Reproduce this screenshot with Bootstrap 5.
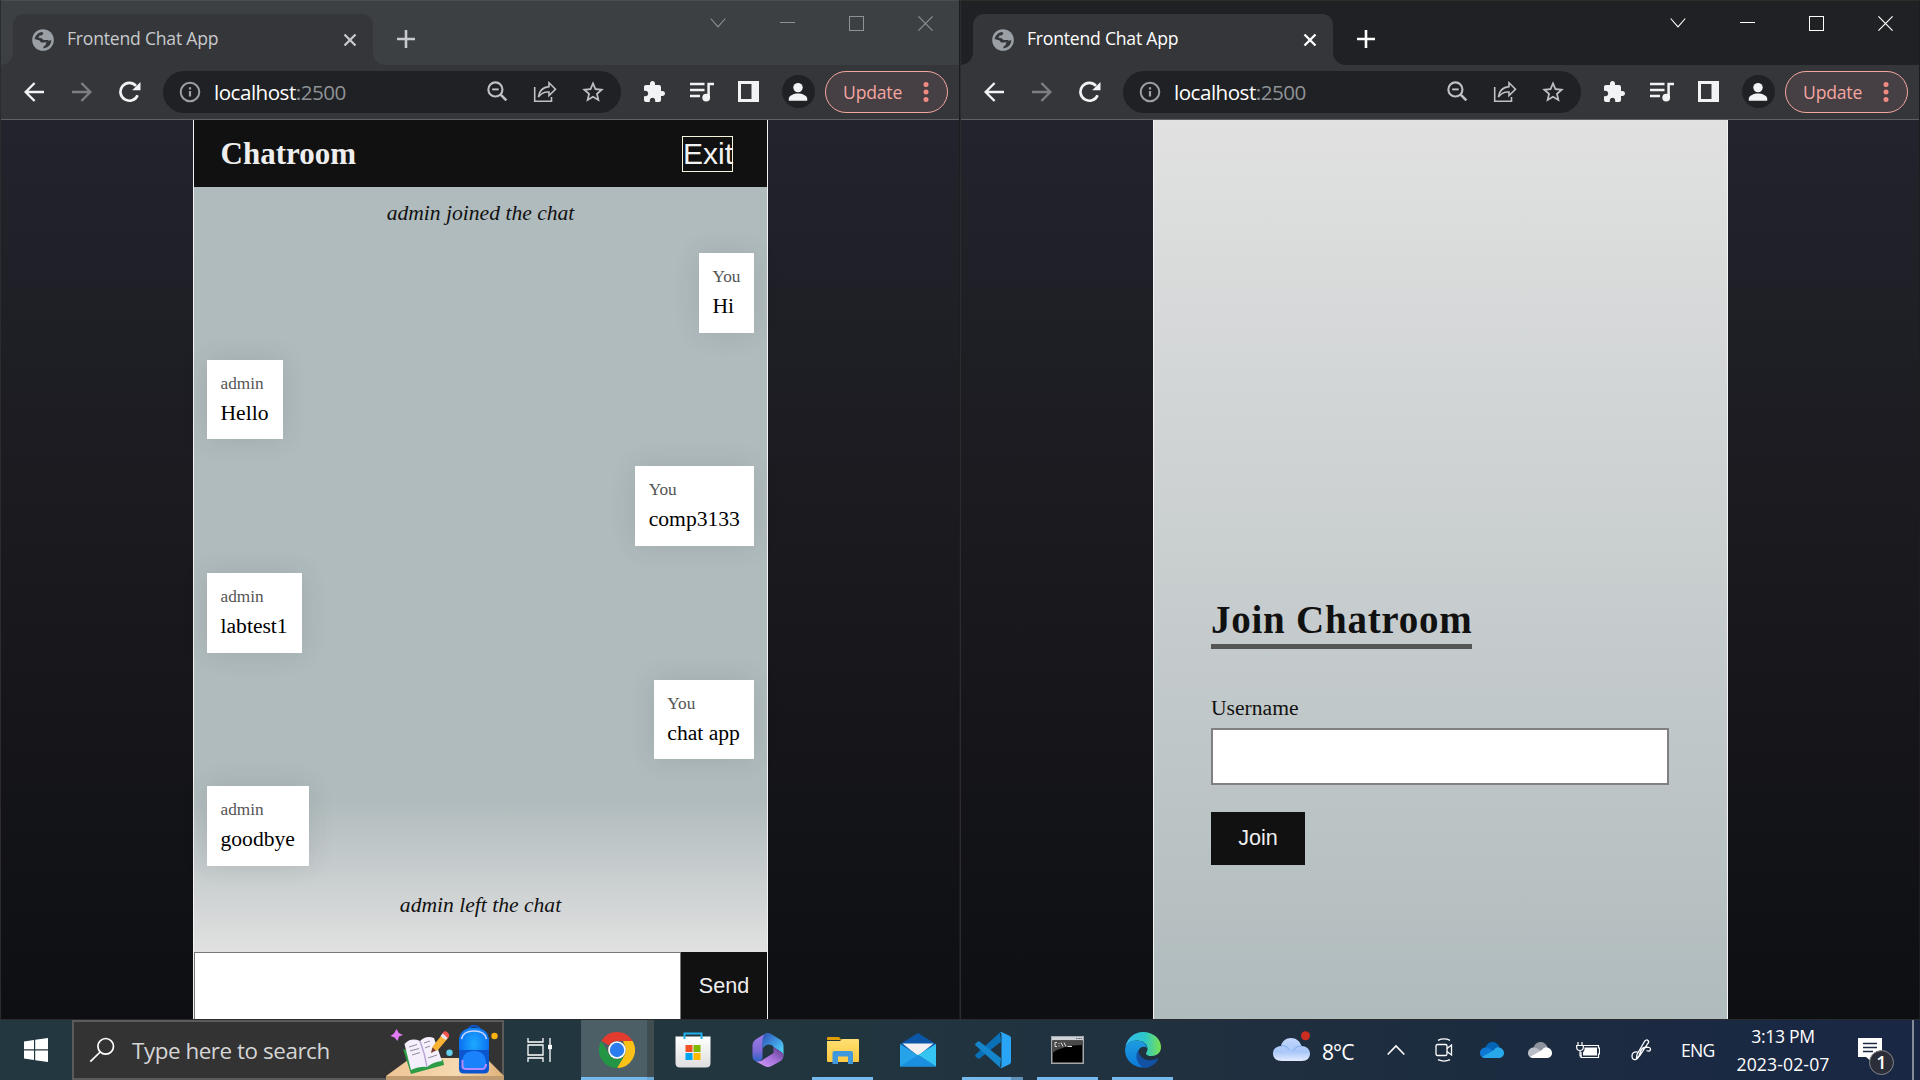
<!DOCTYPE html>
<html lang="en">
<head>
<meta charset="utf-8">
<title>Frontend Chat App</title>
<link href="https://cdn.jsdelivr.net/npm/bootstrap@5.3.0/dist/css/bootstrap.min.css" rel="stylesheet">
<style>
html,body{height:100%;overflow:hidden}
body{font-family:"Open Sans","Noto Sans",sans-serif;background:#0f1014;width:1920px;height:1080px}
svg{display:block;flex:none}
.desk{height:1080px}
.windows{height:1020px;background:#202124}
.win{width:960px;height:1020px;overflow:hidden;position:relative;border-bottom:1px solid #2b2b2b}
.win::before{content:"";position:absolute;left:0;top:0;width:1px;height:100%;background:#2c2c2e;z-index:2}
.win::after{content:"";position:absolute;right:0;top:0;width:1px;height:100%;background:#1d1d1f;z-index:2}
.strip{height:65px;background:#202124;box-shadow:inset 0 1px #2d2c29;--ctl:#fff;color:#fff}
.win-idle .strip{background:#3c4043;box-shadow:inset 0 1px #4b4e50;--ctl:#8f9193;color:#c8cacd}
.tab{width:360px;height:51px;margin:14px 0 0 13px;background:#35363a;border-radius:11px 11px 0 0;position:relative;padding:0 16px 0 19px}
.tab::before,.tab::after{content:"";position:absolute;bottom:0;width:12px;height:12px}
.tab::before{left:-12px;background:radial-gradient(circle at 0 0,transparent 11.5px,#35363a 12px)}
.tab::after{right:-12px;background:radial-gradient(circle at 100% 0,transparent 11.5px,#35363a 12px)}
.tab-title{font-size:17.6px;line-height:49px;margin-left:13px;letter-spacing:-.22px;white-space:nowrap;height:51px}
.newtab{width:48px;height:50px;margin:14px 0 0 9px}
.ctl{width:69px;height:46px;color:var(--ctl);padding-right:1px}
.tools{height:55px;background:#35363a;border-bottom:1px solid #606063;padding:0 0 1px 10px;color:#f1f3f4}
.cell{width:48px;height:42px;display:flex;align-items:center;justify-content:center;flex:none}
.omni{width:458px;height:42px;border-radius:21px;background:#202124;margin:0 9px;padding:0 4px 0 16px;color:#bdc1c6}
.url{font-size:20.6px;line-height:42px;margin-left:13px;letter-spacing:-.5px;color:#fff}
.url span{color:#8f9296}
.avatar{width:33px;height:33px;border-radius:50%;background:#202124}
.upd{width:123px;height:42px;border:1.5px solid #f3a6a0;border-radius:21px;background:#463f43;color:#f3a6a0;font-size:17.6px;letter-spacing:-.2px;margin-left:3px;padding:0 18px 0 17px;line-height:38px}
.page{height:899px;background:linear-gradient(#23232d,#1a1a1f 45%,#0e0f13);padding-left:193px;font-family:"Liberation Serif",serif;font-size:21.6px;color:#111}
.shell{width:575px;height:899px;border:1px solid #f3f3f3;border-width:0 1px}
.room{background:#b0bbbd}
.room-head{height:67px;background:#111;padding:0 34px 0 26.5px;color:#eee}
.room-head h1{font:bold 31px/67px "Liberation Serif",serif;margin:0}
.exit{font:30px/34px "Liberation Sans",sans-serif;width:51px;height:36px;border:1px solid #f5f5dc;background:#111;color:#f2f2f2;padding:0;white-space:nowrap;margin-top:1px}
.log{height:765px;padding:14px 13px 0;background:linear-gradient(#b0bbbd 612px,#e1e1e1)}
.note{font-style:italic;line-height:25px;margin-bottom:27px;text-align:center}
.bub{background:#fff;padding:14px 13.5px 13px;margin-bottom:27px;box-shadow:0 0 27px rgba(51,51,51,.12);height:79.67px;color:#000}
.bub small{display:block;font-size:17.28px;line-height:20px;color:#555;margin-bottom:7px}
.bub div{line-height:25px;padding-right:.6px}
.composer{height:67px}
.composer input{width:487px;border:1px solid #777;border-bottom:0;background:#fff;padding:0 12px;outline:0}
.composer button{width:86px;border:0;background:#111;color:#eee;font:21.6px/66px "Liberation Sans",sans-serif;padding:0}
.join{background:linear-gradient(#e1e1e1,#b0bbbd);padding:473px 57px 0 57px}
.join h2{font:bold 39px/46px "Liberation Serif",serif;letter-spacing:.75px;border-bottom:5px solid #555;margin:0 0 47px;height:56px;padding-top:4px}
.join label{line-height:25px;height:32px}
.join input{width:458px;height:57px;border:2px solid #808080;background:#fff;margin-bottom:27px;outline:0}
.join button{width:94px;height:53px;border:0;background:#111;color:#eee;font:21.6px/50px "Liberation Sans",sans-serif;padding:0 0 2px}
.taskbar{height:60px;background:linear-gradient(90deg,#22373f,#21363f 40%,#20303f 62%,#1c2c40 78%,#192744);color:#fff}
.start{width:72px}
.search{width:432px;height:60px;background:#333;border:2px solid #5c5b5c;position:relative;color:#d5d5d5;font-size:22.4px;padding-left:15px}
.search .txt{margin-left:17px;letter-spacing:-.44px;line-height:58px;height:56px;white-space:nowrap}
.school{position:absolute;right:-2px;top:-2px}
.apps{margin-left:2px}
.app{width:61px;height:60px;margin-right:14px;position:relative}
.app.run{border-bottom:3px solid #76b9ed;padding-top:3px}
.app.sel{width:66px;background:#4d5f66;margin-right:0}
.stack{width:7px;background:#3f4c50;border-bottom:3px solid #6ba8d8;margin-right:14px}
.app.vs{border-image:linear-gradient(90deg,#76b9ed 77%,#5f91ba 77%) 3}
.tv{width:75px}
.tray{font-size:17.6px}
.temp{font-size:21px;width:34px;letter-spacing:-.9px;line-height:64px;height:60px;margin:0 31px 0 11px;white-space:nowrap}
.tcell{width:48px;display:flex;justify-content:center}
.lang{width:32px;letter-spacing:-.7px;line-height:60px;height:60px;margin:0 24px 0 21px}
.clock{width:92px;line-height:28px;padding-top:2px;height:60px;white-space:nowrap;letter-spacing:-.3px}
.clock .day{letter-spacing:.12px}
.bell{position:relative;margin-left:29px;width:36px;height:60px}
.bell svg{position:absolute;left:0;top:16px}
.bubble-n{position:absolute;left:11px;top:30px;width:25px;height:25px;border-radius:50%;border:1px solid #85878c;background:#2b2e38;font:600 18px/22px "Open Sans",sans-serif;text-align:center}
.showdesk{width:8px;border-left:2px solid #838a98;margin-left:18px;height:60px}
</style>
<script src="https://cdn.jsdelivr.net/npm/bootstrap@5.3.0/dist/js/bootstrap.bundle.min.js"></script>
</head>
<body>
<svg width="0" height="0" class="position-absolute">
<defs>
<symbol id="globe" viewBox="0 0 22 22"><circle cx="11" cy="11" r="10.8" fill="#9aa0a6"/><g fill="#35363a"><path d="M2.6 9.9C3.2 6.6 6 3.4 10.2 2.9L11.3 4.2 10.2 6.2 7.5 6.600 6.500 8.700 9.800 9.300 12 11.500 11.900 13.500 9 13.600 7.600 11.600Z"/><path d="M19.300 11.300c.1 4.200-3.300 7.900-8 8.100l.4-2.100 2-1.200.4-2.300 2.300-2.200Z"/><path d="M11 11h5v1.600l-3 1-2-.7z"/></g></symbol>
<symbol id="cross" viewBox="0 0 14 14"><path d="M1.500 1.500 12.500 12.500M12.500 1.500 1.500 12.500" stroke="currentColor" stroke-width="2.300"/></symbol>
<symbol id="plus" viewBox="0 0 18 18"><path d="M9 0V18M0 9H18" stroke="currentColor" stroke-width="2.600"/></symbol>
<symbol id="c-down" viewBox="0 0 16 16"><path d="M.7 3.500 8 11.800 15.300 3.500" fill="none" stroke="currentColor" stroke-width="1.100"/></symbol>
<symbol id="c-min" viewBox="0 0 15 15"><path d="M0 6.500H15" stroke="currentColor"/></symbol>
<symbol id="c-max" viewBox="0 0 15 15"><rect x=".5" y=".5" width="14" height="14" fill="none" stroke="currentColor"/></symbol>
<symbol id="c-close" viewBox="0 0 15 15"><path d="M.4.4 14.600 14.600M14.600.4.4 14.600" stroke="currentColor" stroke-width="1.200"/></symbol>
<symbol id="back" viewBox="0 0 20 20"><path d="M20 10H1.800M10.600 1 1.600 10l9 9" fill="none" stroke="currentColor" stroke-width="2.400"/></symbol>
<symbol id="reload" viewBox="0 0 22 22"><path d="M18.600 14.200A8.900 8.900 0 1 1 17 4.900" fill="none" stroke="currentColor" stroke-width="2.700"/><path d="M21.500 1V9.200H13.200Z" fill="currentColor"/></symbol>
<symbol id="info" viewBox="0 0 22 22"><circle cx="11" cy="11" r="9.300" fill="none" stroke="#9aa0a6" stroke-width="2"/><path d="M11 10V15.600M11 6.200V8.400" stroke="#9aa0a6" stroke-width="2.200"/></symbol>
<symbol id="zoomout" viewBox="0 0 22 22"><circle cx="8.800" cy="8.800" r="7.400" fill="none" stroke="currentColor" stroke-width="2.200"/><path d="M5.400 8.800h6.800" stroke="currentColor" stroke-width="2"/><path d="M14 14l6.300 6.300" stroke="currentColor" stroke-width="2.800"/></symbol>
<symbol id="share" viewBox="0 0 24 22"><path d="M1.700 6v14.300h16.800V16" fill="none" stroke="currentColor" stroke-width="1.600"/><path d="M16 1.800 22.500 8.200 16 14.600V11C11.500 10.700 8 12 5.400 16.200 6 10.500 9.600 6.200 16 5.600Z" fill="none" stroke="currentColor" stroke-width="1.600"/></symbol>
<symbol id="star" viewBox="0 0 24 24"><path fill="currentColor" d="M22 9.240l-7.190-.62L12 2 9.190 8.630 2 9.240l5.460 4.730L5.820 21 12 17.270 18.180 21l-1.630-7.030L22 9.240zM12 15.400l-3.760 2.270 1-4.280-3.320-2.880 4.380-.38L12 6.100l1.710 4.040 4.380.38-3.320 2.880 1 4.280L12 15.400z"/></symbol>
<symbol id="ext" viewBox="0 0 24 24"><path fill="currentColor" d="M20.500 11H19V7c0-1.100-.9-2-2-2h-4V3.500C13 2.120 11.880 1 10.500 1S8 2.120 8 3.500V5H4c-1.100 0-1.990.9-1.990 2v3.800H3.500c1.490 0 2.700 1.210 2.700 2.700s-1.210 2.700-2.700 2.700H2V20c0 1.100.9 2 2 2h3.800v-1.500c0-1.490 1.210-2.700 2.700-2.700 1.490 0 2.700 1.210 2.700 2.700V22H17c1.100 0 2-.9 2-2v-4h1.500c1.380 0 2.500-1.120 2.500-2.500S21.880 11 20.500 11z"/></symbol>
<symbol id="music" viewBox="0 0 24 20"><path d="M0 2H14.500M0 8H14.500M0 14H10M24 2H18.600V15.500" fill="none" stroke="currentColor" stroke-width="2.500"/><circle cx="16.200" cy="15.600" r="3.900" fill="currentColor"/></symbol>
<symbol id="panel" viewBox="0 0 21 21"><path fill="currentColor" fill-rule="evenodd" d="M0 0H21V21H0ZM3 3V18H13.500V3Z"/></symbol>
<symbol id="person" viewBox="0 0 20 20"><circle cx="10" cy="5.600" r="4.700" fill="currentColor"/><path d="M.8 18.800V16.600C.8 13.400 6 11.400 10 11.400s9.200 2 9.200 5.200V18.800Z" fill="currentColor"/></symbol>
<symbol id="dots" viewBox="0 0 6 20"><g fill="#f28b82"><circle cx="3" cy="2.600" r="2.500"/><circle cx="3" cy="10" r="2.500"/><circle cx="3" cy="17.400" r="2.500"/></g></symbol>
<symbol id="od" viewBox="0 0 24 16"><path d="M5.500 6C6.500 2 9.500 0 12.500 0c3 0 6 2 7 5L12 11Z" fill="var(--a)"/><path d="M5 16C2 16 0 13.700 0 11c0-3 2.300-5.500 5.500-5.500 2 0 3.300.5 5 1.700L16 11 5 16Z" fill="var(--b)"/><path d="M2 15 14 8C15.500 5.500 18 4.800 20 5.800c2.500.7 4 2.700 4 5.200 0 2.800-2 5-5 5H5Z" fill="var(--c)"/></symbol>
<linearGradient id="gEdge" x1="0" x2="1"><stop stop-color="#35b8f1"/><stop offset=".55" stop-color="#2cc7c9"/><stop offset="1" stop-color="#7be34e"/></linearGradient>
<linearGradient id="gEdge2" x1="0" y1="0" x2="0" y2="1"><stop stop-color="#1e9de0"/><stop offset="1" stop-color="#0b7bd8"/></linearGradient>
<linearGradient id="gM1" x1="0" y1="0" x2="0" y2="1"><stop stop-color="#a17be6"/><stop offset=".6" stop-color="#7f6bd8"/><stop offset="1" stop-color="#2a63c4"/></linearGradient>
<linearGradient id="gM2" x1="0" y1="0" x2="1" y2="1"><stop stop-color="#2b4fb5"/><stop offset=".6" stop-color="#43a6e8"/><stop offset="1" stop-color="#58e8fb"/></linearGradient>
<linearGradient id="gM3" x1="0" y1="1" x2="1" y2="0"><stop stop-color="#d59cf5"/><stop offset=".5" stop-color="#a573dc"/><stop offset="1" stop-color="#5a3585"/></linearGradient>
<linearGradient id="gStore" x1="0" y1="0" x2="0" y2="1"><stop stop-color="#fff"/><stop offset="1" stop-color="#dedede"/></linearGradient>
<linearGradient id="gFold" x1="0" y1="0" x2="0" y2="1"><stop stop-color="#ffdf72"/><stop offset="1" stop-color="#fcc93f"/></linearGradient>
<linearGradient id="gCloud" x1="0" y1="0" x2="0" y2="1"><stop stop-color="#c2d8fc"/><stop offset=".6" stop-color="#a9c6f8"/><stop offset="1" stop-color="#e3edff"/></linearGradient>
<radialGradient id="gBag" cx=".5" cy=".35" r=".7"><stop stop-color="#1da9ff"/><stop offset=".65" stop-color="#0c76f2"/><stop offset="1" stop-color="#0b4cb8"/></radialGradient>
<linearGradient id="gDesk" x1="0" x2="1"><stop stop-color="#eec393"/><stop offset=".6" stop-color="#f6d9b0"/><stop offset="1" stop-color="#e0b078"/></linearGradient>
</defs>
</svg>

<div class="desk d-flex flex-column">
<main class="windows d-flex">

<section class="win win-idle">
  <div class="strip d-flex">
    <div class="tab d-flex align-items-center"><svg width="22" height="22"><use href="#globe"/></svg><div class="tab-title flex-grow-1">Frontend Chat App</div><svg width="14" height="14" class="me-0"><use href="#cross"/></svg></div>
    <div class="newtab d-flex align-items-center justify-content-center"><svg width="18" height="18"><use href="#plus"/></svg></div>
    <div class="d-flex ms-auto">
      <div class="ctl d-flex align-items-center justify-content-center"><svg width="16" height="16"><use href="#c-down"/></svg></div>
      <div class="ctl d-flex align-items-center justify-content-center"><svg width="15" height="15"><use href="#c-min"/></svg></div>
      <div class="ctl d-flex align-items-center justify-content-center"><svg width="15" height="15"><use href="#c-max"/></svg></div>
      <div class="ctl d-flex align-items-center justify-content-center"><svg width="15" height="15"><use href="#c-close"/></svg></div>
    </div>
  </div>
  <div class="tools d-flex align-items-center">
    <div class="cell"><svg width="20" height="20"><use href="#back"/></svg></div>
    <div class="cell" style="color:#7d7e81"><svg width="20" height="20" style="transform:scaleX(-1)"><use href="#back"/></svg></div>
    <div class="cell"><svg width="22" height="22"><use href="#reload"/></svg></div>
    <div class="omni d-flex align-items-center">
      <svg width="22" height="22"><use href="#info"/></svg><div class="url flex-grow-1">localhost<span>:2500</span></div>
      <div class="cell"><svg width="21" height="21"><use href="#zoomout"/></svg></div>
      <div class="cell"><svg width="24" height="22"><use href="#share"/></svg></div>
      <div class="cell"><svg width="26" height="26"><use href="#star"/></svg></div>
    </div>
    <div class="cell"><svg width="24" height="24"><use href="#ext"/></svg></div>
    <div class="cell"><svg width="24" height="20"><use href="#music"/></svg></div>
    <div class="cell pe-1"><svg width="21" height="21"><use href="#panel"/></svg></div>
    <div class="cell"><div class="avatar d-flex align-items-center justify-content-center"><svg width="20" height="20"><use href="#person"/></svg></div></div>
    <div class="upd d-flex align-items-center justify-content-between">Update<svg width="6" height="20"><use href="#dots"/></svg></div>
  </div>
  <div class="page">
    <div class="shell room">
      <header class="room-head d-flex align-items-center justify-content-between"><h1>Chatroom</h1><button class="exit">Exit</button></header>
      <div class="log d-flex flex-column">
        <div class="note">admin joined the chat</div>
        <div class="bub align-self-end"><small>You</small><div>Hi</div></div>
        <div class="bub align-self-start"><small>admin</small><div>Hello</div></div>
        <div class="bub align-self-end"><small>You</small><div>comp3133</div></div>
        <div class="bub align-self-start"><small>admin</small><div>labtest1</div></div>
        <div class="bub align-self-end"><small>You</small><div>chat app</div></div>
        <div class="bub align-self-start"><small>admin</small><div>goodbye</div></div>
        <div class="note">admin left the chat</div>
      </div>
      <div class="composer d-flex"><input type="text" aria-label="Message"><button>Send</button></div>
    </div>
  </div>
</section>

<section class="win">
  <div class="strip d-flex">
    <div class="tab d-flex align-items-center"><svg width="22" height="22"><use href="#globe"/></svg><div class="tab-title flex-grow-1">Frontend Chat App</div><svg width="14" height="14" class="me-0"><use href="#cross"/></svg></div>
    <div class="newtab d-flex align-items-center justify-content-center"><svg width="18" height="18"><use href="#plus"/></svg></div>
    <div class="d-flex ms-auto">
      <div class="ctl d-flex align-items-center justify-content-center"><svg width="16" height="16"><use href="#c-down"/></svg></div>
      <div class="ctl d-flex align-items-center justify-content-center"><svg width="15" height="15"><use href="#c-min"/></svg></div>
      <div class="ctl d-flex align-items-center justify-content-center"><svg width="15" height="15"><use href="#c-max"/></svg></div>
      <div class="ctl d-flex align-items-center justify-content-center"><svg width="15" height="15"><use href="#c-close"/></svg></div>
    </div>
  </div>
  <div class="tools d-flex align-items-center">
    <div class="cell"><svg width="20" height="20"><use href="#back"/></svg></div>
    <div class="cell" style="color:#7d7e81"><svg width="20" height="20" style="transform:scaleX(-1)"><use href="#back"/></svg></div>
    <div class="cell"><svg width="22" height="22"><use href="#reload"/></svg></div>
    <div class="omni d-flex align-items-center">
      <svg width="22" height="22"><use href="#info"/></svg><div class="url flex-grow-1">localhost<span>:2500</span></div>
      <div class="cell"><svg width="21" height="21"><use href="#zoomout"/></svg></div>
      <div class="cell"><svg width="24" height="22"><use href="#share"/></svg></div>
      <div class="cell"><svg width="26" height="26"><use href="#star"/></svg></div>
    </div>
    <div class="cell"><svg width="24" height="24"><use href="#ext"/></svg></div>
    <div class="cell"><svg width="24" height="20"><use href="#music"/></svg></div>
    <div class="cell pe-1"><svg width="21" height="21"><use href="#panel"/></svg></div>
    <div class="cell"><div class="avatar d-flex align-items-center justify-content-center"><svg width="20" height="20"><use href="#person"/></svg></div></div>
    <div class="upd d-flex align-items-center justify-content-between">Update<svg width="6" height="20"><use href="#dots"/></svg></div>
  </div>
  <div class="page">
    <form class="shell join d-flex flex-column align-items-start">
      <h2>Join Chatroom</h2>
      <label for="user">Username</label>
      <input id="user" type="text">
      <button type="button">Join</button>
    </form>
  </div>
</section>
</main>

<footer class="taskbar d-flex">
  <div class="start d-flex align-items-center justify-content-center"><svg width="24" height="24" viewBox="0 0 24 24" fill="#fff"><path d="M0 3.500 10 2V11.300H0ZM11.200 1.800 24 0V11.300H11.200ZM0 12.500H10V22L0 20.600ZM11.200 12.500H24V24L11.200 22.200Z"/></svg></div>
  <div class="search d-flex align-items-center">
    <svg width="26" height="26" viewBox="0 0 26 26" fill="none" stroke="#fff" stroke-width="1.700"><circle cx="16.700" cy="9.300" r="7.800"/><path d="M11.200 15 1.300 24.700"/></svg>
    <span class="txt">Type here to search</span>
    <svg class="school" width="118" height="60" viewBox="386 1020 118 60">
      <path d="M386 1076 408 1060Q411 1058 416 1058H481Q486 1058 489 1061L504 1076Z" fill="url(#gDesk)"/><path d="M386 1076H504V1080H386Z" fill="#bd9a6f"/>
      <path d="M396.500 1029 398.800 1033 403 1035 399 1036.500 397.500 1041 394.500 1037.500 390.500 1036 394 1033.500Z" fill="#e07bf5"/>
      <path d="M403 1049 411 1074 444 1065 443 1060Z" fill="#2d9c46"/>
      <path d="M404.500 1044Q411 1037 420 1041 426 1035 434 1038L442 1061Q433 1062 427 1067 420 1066 411 1070Z" fill="#f4effb"/><path d="M420 1041Q425 1054 427 1067" stroke="#b9a6d8" stroke-width="1.500" fill="none"/><path d="M409 1047 417 1044.500M410 1051 419 1048.500M412 1055 420 1052.500M424 1043 430 1041M425 1048 430 1046M428 1058 437 1055" stroke="#8e8a99" stroke-width="1"/>
      <path d="M431 1052 433 1046 443 1033.500 448.500 1037.500 438 1050Z" fill="#f9b233"/><path d="M431 1053 432.500 1047.500 436 1050.500Z" fill="#7a3b3b"/><path d="M440.500 1036 443 1033 448 1037.500 445.500 1040Z" fill="#e8e4ee"/><path d="M442.500 1033 445 1031Q450 1033 449 1036.500L447.500 1038Z" fill="#f5554a"/>
      <circle cx="449.500" cy="1052.800" r="3.200" fill="#62d0ea"/><circle cx="494.500" cy="1036" r="3.200" fill="#fdb30f"/>
      <path d="M469 1029Q470 1026 474 1026T479.500 1029" fill="none" stroke="#0f52bd" stroke-width="2.500"/>
      <rect x="459" y="1028" width="30" height="45" rx="12" ry="12" fill="url(#gBag)"/><path d="M459 1050H489V1069Q489 1073.500 484 1073.500H464Q459 1073.500 459 1069Z" fill="#0b56cf"/>
      <path d="M461.500 1039Q463 1031 474 1031T486.500 1039" fill="none" stroke="#c9d5ff" stroke-width="1.600"/>
      <path d="M462 1067V1062Q463 1051 474 1051T486 1062V1065Q486 1069 482 1069H464Q462 1069 462 1067Z" fill="#1a83fb"/><path d="M462.500 1060V1067Q463 1069 466 1069H483Q486 1068 486 1064" fill="none" stroke="#b48bff" stroke-width="2"/>
    </svg>
  </div>
  <div class="apps d-flex">
    <div class="tv d-flex align-items-center" style="padding-left:21px"><svg width="26" height="24" viewBox="0 0 26 24" fill="none" stroke="#fff" stroke-width="1.300"><path d="M1 0V4H16V0M1 24V20H16V24M1 7H16V17H1ZM23 0V24"/><rect x="21.700" y="7.500" width="2.600" height="3" fill="#fff"/></svg></div>
    <div class="app run sel d-flex align-items-center justify-content-center" style="padding-left:6px"><svg width="36" height="36" viewBox="0 0 36 36"><path d="M18 0A18 18 0 0 1 33.600 9H18A9 9 0 0 0 10.200 13.500L2.400 9A18 18 0 0 1 18 0Z" fill="#e33b2e"/><path d="M33.600 9A18 18 0 0 1 18 36L25.800 22.500A9 9 0 0 0 25.800 13.500L24 9Z" fill="#fbc116"/><path d="M2.400 9A18 18 0 0 0 18 36L25.800 22.500A9 9 0 0 1 10.200 22.500Z" fill="#239645"/><circle cx="18" cy="18" r="8.800" fill="#fff"/><circle cx="18" cy="18" r="7.200" fill="#2b7cee"/></svg></div>
    <div class="stack"></div>
    <div class="app d-flex align-items-center justify-content-center" style="margin-left:-6px"><svg width="36" height="36" viewBox="0 0 36 36"><path d="M.5 4.500H35.500V31Q35.500 35.500 31 35.500H5Q.5 35.500 .5 31Z" fill="url(#gStore)"/><path d="M9.500 7V1.500H26.500V7" fill="none" stroke="#1fb0ee" stroke-width="2"/><path d="M10.500 13h7v7h-7z" fill="#f25022"/><path d="M18.500 13h7v7h-7z" fill="#7fba00"/><path d="M10.500 21h7v7h-7z" fill="#00a4ef"/><path d="M18.500 21h7v7h-7z" fill="#ffb900"/></svg></div>
    <div class="app d-flex align-items-center justify-content-center"><svg width="32" height="34" viewBox="0 0 32 34"><path d="M13 1 5 5.500Q.5 8 .5 12.500V23Q.5 27 4 28.500 9 29.500 10.500 25V13Q10.500 4 17 0Q14.500 0 13 1Z" fill="url(#gM1)"/><path d="M13 1Q16 -1 19 1L28 6.500Q31.500 9 31.500 13V24Q31.500 20 28.500 18.500L21.500 14Q21 11.500 16 11.500 12.500 12 10.500 16V8Q10.500 3 13 1Z" fill="url(#gM2)"/><path d="M31.500 22Q31.500 26.500 28 28.500L19 33.300Q16 34.800 13 33.300L4 28.500Q9 29 12 26L21.500 20V14L28.500 18.500Q31.500 20 31.500 22Z" fill="url(#gM3)"/></svg></div>
    <div class="app run d-flex align-items-center justify-content-center"><svg width="32" height="28" viewBox="0 0 32 28"><path d="M0 2Q0 1 1 1H12L14.500 4H0Z" fill="#e09d05"/><path d="M0 5H13L15 3H31Q32 3 32 4V25Q32 26 31 26H1Q0 26 0 25Z" fill="url(#gFold)"/><path d="M5.500 28V17Q5.500 15 7.500 15H24Q26 15 26 17V28H21V20.500H11V28Z" fill="#3f97dc"/></svg></div>
    <div class="app d-flex align-items-center justify-content-center"><svg width="36" height="34" viewBox="0 0 36 34"><path d="M0 11 18 0 36 11V18H0Z" fill="#0b56a6"/><path d="M2.500 10.500H33.500L18 23Z" fill="#f1f0f2"/><path d="M0 11 36 33.500H0Z" fill="#26a2e8"/><path d="M36 11V33.500L18 22Z" fill="#35c5f2"/><path d="M0 33.500 18 22 36 33.500Z" fill="#1a8fe0"/></svg></div>
    <div class="app run vs d-flex align-items-center justify-content-center"><svg width="36" height="36" viewBox="0 0 36 36"><path d="M26 9.800 4.500 26.500Q3.500 27.200 2.500 26.300L.6 24.500Q-.3 23.500 .6 22.500L25 .5Z" fill="#0a70b8"/><path d="M26 26.200 4.500 9.500Q3.500 8.800 2.500 9.700L.6 11.500Q-.3 12.500 .6 13.500L25 35.500Z" fill="#1585cc"/><path d="M25 0Q26 -.3 27 .2L34.500 3.700Q36 4.500 36 6V30Q36 31.500 34.500 32.300L27 35.800Q26 36.300 25 35.500Q26.500 35.500 26.500 33V3Q26.500 .5 25 0Z" fill="#2aa5f5"/></svg></div>
    <div class="app run d-flex align-items-center justify-content-center"><svg width="33" height="28" viewBox="0 0 33 28"><path d="M0 0H33V28H0Z" fill="#a5a8ab"/><path d="M1 1H32V4H1Z" fill="#cfd2d6"/><path d="M1.500 4.500H31.500V26.500H1.500Z" fill="#000"/><path d="M1.500 4.500H31.500V9Q12 9 1.500 17Z" fill="#484848"/><path d="M6 6.500H4V10.500H6M8 7V8M8 9.500V10.500M10 6.500 12 10.500M13 6.500 15 10.500M16.500 10.500H21" stroke="#d9d9d9" fill="none"/><path d="M25 2.500H31" stroke="#555e70" stroke-dasharray="1.500 .800"/></svg></div>
    <div class="app run d-flex align-items-center justify-content-center"><svg width="36" height="36" viewBox="0 0 36 36"><path d="M.2 16C1.500 6.500 9 0 18 0 28.500 0 36 7 36 15c0 5.500-4 9-9 9-3.500 0-6-1.200-6-2.600 0-1 1.500-1.800 1.500-4.400C22.500 12 18 8.500 12 8.500 6 8.500 1.500 12 .2 16Z" fill="url(#gEdge)"/><path d="M0 18C.5 12 5.500 8.500 11.500 8.500c6 0 10 3.200 10.500 7.500-2-2-7-2-8.500 2.500C11 26 17 33 25 34.200 14 39 0 31 0 18Z" fill="url(#gEdge2)"/><path d="M13.500 18C9.500 22.500 11 33 19.500 35.800 25 36 31 32 33.300 27.200 33.600 26.500 33 26.300 32.500 26.600 22 31 13.500 26 13.500 18Z" fill="#1351a3"/></svg></div>
  </div>
  <div class="tray d-flex align-items-center ms-auto">
    <svg width="38" height="32" viewBox="0 0 38 32" style="margin-bottom:6px"><path d="M9 30C3 30 0 27 0 22.500S3 15.500 8 15C9 10 13 7 18 7s9 3 10.500 8C33 15 37 18 37 22.500S34 30 29 30Z" fill="url(#gCloud)"/><path d="M8 15Q14 14 16 19M28.500 15Q22 15 20.500 20" stroke="#7faaf0" fill="none"/><circle cx="32.500" cy="4.700" r="4.500" fill="#cb2d20"/></svg>
    <div class="temp">8°C</div>
    <svg width="18" height="12" viewBox="0 0 18 12"><path d="M.7 10.500 9 2 17.300 10.500" fill="none" stroke="#fff" stroke-width="1.600"/></svg>
    <div class="tcell" style="margin-left:15px"><svg width="18" height="24" viewBox="0 0 18 24" fill="none" stroke="#fff" stroke-width="1.300"><rect x="1" y="6.500" width="11" height="11" rx="1.500"/><path d="M12 10.500 16.500 7V17L12 13.500M3 2.300Q9 -.5 15 2.300M3 21.700Q9 24.500 15 21.700"/></svg></div>
    <div class="tcell"><svg width="24" height="16" style="--a:#0364b8;--b:#0f78d4;--c:#28a8ea"><use href="#od"/></svg></div>
    <div class="tcell"><svg width="24" height="16" style="--a:#8e939e;--b:#b9bdc6;--c:#fff"><use href="#od"/></svg></div>
    <div class="tcell"><svg width="24" height="18" viewBox="0 0 24 18"><path d="M7 4.500H22.500V7H23.500V13H22.500V16.500H5V11" fill="none" stroke="#fff" stroke-width="1.200"/><path d="M8.500 6.500H21V14.500H7V11.500L8.500 9Z" fill="#fff"/><path d="M2 1V4M6 1V4M.7 4.500H7.300V7Q7 9.500 4 9.500T.7 7ZM4 9.500V15H6" fill="none" stroke="#fff" stroke-width="1.200"/></svg></div>
    <div class="tcell" style="padding-left:10px"><svg width="21" height="22" viewBox="0 0 21 22" fill="none" stroke="#fff" stroke-width="1.300"><path d="M13.500 2.500Q15.500 0 17 1.500T16.500 5L8.500 17 5.500 19 6 15.500ZM6.500 13Q1 12.500 1 17 1 21 4.500 20.500 7.500 20 9 14 10.500 9 13.500 8.500 20 7.500 19.500 10.500 19 13 15.500 11.500"/></svg></div>
    <div class="lang">ENG</div>
    <div class="clock d-flex flex-column align-items-center"><span>3:13 PM</span><span class="day">2023-02-07</span></div>
    <div class="bell"><svg width="24" height="28" viewBox="0 0 24 28"><path d="M0 2H24V21H14V26L8 21H0Z" fill="#fff"/><path d="M5 7.500H19M5 11.500H19M5 15.500H15" stroke="#1b2942" stroke-width="1.300"/></svg><span class="bubble-n">1</span></div>
    <div class="showdesk"></div>
  </div>
</footer>
</div>
</body>
</html>
